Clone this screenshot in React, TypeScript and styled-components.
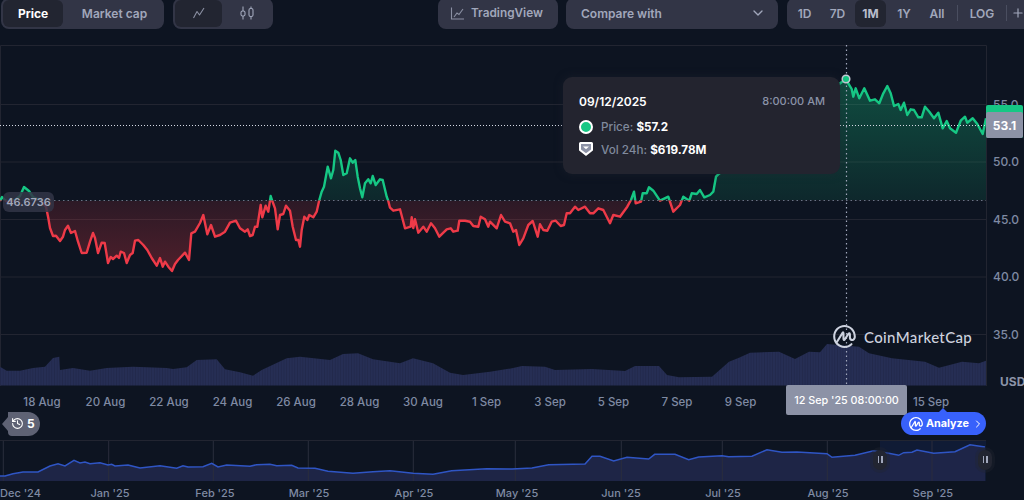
import React from "react";
import styled, { createGlobalStyle } from "styled-components";
import { ChevronDown, History, Plus, ChevronRight } from "lucide-react";
import { SiCoinmarketcap } from "react-icons/si";

const Global = createGlobalStyle`
  html, body { margin: 0; padding: 0; background: #0d1421; }
  * { box-sizing: border-box; }
`;

const PRICE = "0,201 2,197 5,200 8,202 15,200 20,196 24,187 29,191 33,197 40,200 46,206.7 48.3,218 50,228 53,236 56,235.7 60,241 63,236.7 65,230 68,225.7 71,233 75,231 78,241.7 81.7,253 86.7,252.7 90,241.7 93,233 95,238 98,253 101.7,242.7 104.7,243 108,263 110.7,257 113,259 116.7,255.7 119,258 120.7,251.7 124,253 126.7,263 130,255 132.7,253 135,240.7 138.3,240 143.3,245 147.3,250 151.7,258 156.7,265.7 160,258 162.7,266.7 165,261.7 168.3,266.7 172,271 175,264 178,260 185,252.7 189,260 191.3,233.3 195,231.7 200,223 203.3,215 207.3,234.3 211,225 215,236.7 220,235 225,231.7 230,222.7 236,220.7 240,228.3 245,231.7 247.7,229.3 250,236 252.7,235 255,226.7 257.3,226.7 260.7,205 262.3,217.3 265.7,205.7 268.3,211.7 270.7,196 272.3,201 275,208.3 277.7,229.3 280,215 283.3,214 286,205.7 290,210.7 292.7,226.7 296,240 298.3,240 300,246.7 301.7,230 304.3,216.7 307.3,220 309.3,215 313.3,217.3 316.7,211.7 319.3,200 321.7,191.7 324,186.7 327.7,166.7 331,178.3 333.3,170 335.3,150.7 338.3,152.7 340.7,160 343.3,175 346.7,173.3 350,158.3 352.7,162.7 355.3,160 357.7,176.7 360,188.3 362.3,197.3 365,183.3 368.3,179.3 370.7,183.3 372.7,176 375.7,185 380,179.3 382.7,180 386.7,196.7 388.3,201 390,207.7 393.3,210.7 400,209.3 405,228.3 410.7,226.7 411.7,217.3 413.3,228 415,219.3 418.3,232.7 423.3,226.7 426.7,231.7 431,223.3 435,228.3 439.3,236.7 446.7,229.3 450.7,228.3 453.3,231.7 457.7,230.7 459.3,220.7 465,220.7 470,221.7 473.3,226 478.3,226.7 480.7,216.7 485,219.3 488.3,226.7 490,221.7 496.7,228.3 501,215 505,221.7 510,223.3 513.3,231.7 516,230 519.3,245 523.3,238.3 528.3,225 532.7,221 537.7,236.7 540,224.3 543.3,230 547.3,230.7 551.7,221.7 555.7,220.7 560.7,226 564,225 566.7,213.3 570,213.3 575,206.7 578.3,210 585,206.7 590,213.3 593.3,213.3 598.3,208.3 603.3,210 610,223.3 613.3,215 620,216.7 627.3,206.7 631,200 634,191.7 635.7,203.3 641,201.7 642.7,193.3 646.7,193.3 649,187.3 653.3,190.7 660,200.7 668.3,196.7 673.3,211.7 680,205 683.3,196.7 689.3,200.7 691.7,193.3 696.7,194 700,190 704.3,197.3 710,195 713.3,191.7 716,176.7 718.3,174.3 780,130 846,78.7 848.3,83.3 851.7,89 853.3,96.7 855.7,88.3 859.3,98.3 864.3,88.3 870,100.7 875,99.3 879.3,103.3 883.3,93.3 887.3,86 890.7,93.3 894,106 898.3,104 900.7,110 904,102.7 907.3,115 910.7,109.3 914,110 918.3,117.3 921.7,117.3 925,106.7 929.3,111.7 934,118.3 938.3,112.7 942.7,128.3 946.7,121 950,128.3 956,132.7 960.7,120.7 965,116.7 967.3,122.7 972.7,118.3 977.3,124 982.7,134 986,118.3";

const VOLUME = "0,366.7 6.7,370.7 20,370.7 33,368 45,366.7 53,358 59.3,356.7 60,370 73,368 90,370.7 106.7,368 133,366.7 166.7,368 173,369 186.7,367.3 196.7,360 216.7,359.3 225,369.3 240,372.3 253,375.7 261.7,370 286.7,358.3 300,356.7 330,360 343,354 358,353.3 373,359.3 400,363.3 413,358.3 433,363.3 450,372.7 463,375 490,371.7 512,368.3 522,366 545,366.7 555,370 592,369 625,371 635,366 659,366 667,375 679,377.3 712,376.7 729,361.7 739,357.7 750,352.7 779,351.7 795,359 809,351.7 820,352.3 827,344 859,346.7 869,353.3 892,358.3 925,361.7 939,367.7 962,361.7 979,363.3 986,360.7";

const NAV = "0,475 5,475 13,472.7 23,471 38,471 50,465 58,462.7 65,465 74,459.3 80,462 85,461 90,462.7 100,461.7 108,464 111.7,463.3 115,465 128,464 140,467 160,464.7 176.7,467.3 183,464.7 188,466 203,465.7 211.7,462.3 218,466 226.7,464 250,465.3 256.7,463.7 270,463.3 276.7,464.7 291.7,464.3 298,467 315,467.3 328,470.3 353,472.3 373,470.7 390,469.7 413,472.3 433,473.3 451.7,469.7 486.7,467.7 512,468 532,467 548.7,463.7 585,463 592,455.3 600,455.3 613.7,460 627,456.3 648.7,458 654.7,453.3 675,453.3 688.7,458.7 698.7,456 722,454.7 728.7,455.7 752,455.3 767,448.7 782,451.3 797,451 827,452.7 832,456.3 855,454.3 873.7,449.7 888.7,452.3 898.7,454.3 903.7,451.7 912,451.3 917,449 933.7,452.3 955,450.7 970,443.7 985,446";

const GRID_Y = [104.5, 162, 219.5, 277, 334.5];
const MONTH_X = [3.3, 108.7, 213.3, 308.3, 413.3, 515.3, 621.3, 722.3, 827.3, 932];
const X_LABELS = ["18 Aug", "20 Aug", "22 Aug", "24 Aug", "26 Aug", "28 Aug", "30 Aug", "1 Sep", "3 Sep", "5 Sep", "7 Sep", "9 Sep", "", "", "15 Sep"];
const PRICES = ["55.0", "50.0", "45.0", "40.0", "35.0"];
const MONTHS: [string, number][] = [
  ["Dec '24", 20], ["Jan '25", 110], ["Feb '25", 215], ["Mar '25", 309], ["Apr '25", 414], ["May '25", 517],
  ["Jun '25", 621], ["Jul '25", 723], ["Aug '25", 828], ["Sep '25", 933],
];

const Page = styled.div`
  width: 1024px; height: 500px; overflow: hidden; background: #0d1421;
  font-family: Inter, "Liberation Sans", sans-serif; display: flex; flex-direction: column;
`;
const Toolbar = styled.div`
  display: flex; height: 31px; margin-top: -2.5px; padding-left: 1px; flex: none; width: 1060px;
`;
const Pill = styled.div<{ $w: number; $gap?: number }>`
  width: ${(p) => p.$w}px; margin-left: ${(p) => p.$gap ?? 0}px; height: 31px; flex: none;
  background: #323546; border-radius: 8px; display: flex; align-items: center; padding: 2px;
  color: #a1a7bb; font-size: 12px; font-weight: 600;
`;
const Tab = styled.div<{ $active?: boolean; $w: number; $tone?: string }>`
  width: ${(p) => p.$w}px; height: 27px; border-radius: 6px; flex: none;
  display: flex; align-items: center; justify-content: center;
  background: ${(p) => (p.$active ? "#222531" : "transparent")};
  color: ${(p) => p.$tone ?? "#a1a7bb"};
  font-size: 12px; font-weight: ${(p) => (p.$tone ? 700 : 600)};
`;
const PillContent = styled.div`
  display: flex; align-items: center; justify-content: space-between; width: 100%; padding: 0 10px 0 13px;
`;
const IconLabel = styled.div`
  display: flex; align-items: center; gap: 6px; padding-left: 10px; font-size: 11.8px;
`;
const Divider = styled.div<{ $left: number }>`
  width: 1px; height: 16px; background: #4a4e60; flex: none; margin: 0 4px 0 ${(p) => p.$left}px;
`;
const LogBtn = styled.div`
  width: 40px; flex: none; text-align: center; font-size: 12px; font-weight: 600; color: #a1a7bb;
`;

const Plot = styled.div`
  position: relative; display: flex; height: 341px; margin-top: 16.5px; flex: none;
`;
const PlotSvg = styled.svg`
  width: 987px; height: 341px; display: block; flex: none;
`;
const PriceAxis = styled.div`
  width: 37px; flex: none; display: flex; flex-direction: column; padding-top: 30.5px;
`;
const PriceTick = styled.div`
  height: 57.5px; flex: none; display: flex; align-items: center; padding-left: 6px;
  color: #7f8aa3; font-size: 12px; font-weight: 500;
`;
const Usd = styled.div`
  margin-top: 11px; color: #8b93a8; font-size: 12px; font-weight: 700; white-space: nowrap; padding-left: 13px;
`;
const LastPrice = styled.div`
  position: absolute; left: 986px; top: 60px; width: 37px; height: 33px; background: #16c784; border-radius: 2px;
  display: flex; align-items: flex-end;
`;
const LastPriceValue = styled.div`
  width: 100%; height: 26px; background: #8c92a6; border-radius: 2px; color: #fff; font-size: 12px; font-weight: 700;
  display: flex; align-items: center; justify-content: center;
`;
const BaseTag = styled.div`
  position: absolute; left: 3px; top: 147px; width: 51px; height: 20px; border-radius: 6px;
  background: rgba(50, 53, 70, 0.85); color: #a1a7bb; font-size: 11px; font-weight: 600;
  display: flex; align-items: center; justify-content: center;
`;
const Tooltip = styled.div`
  position: absolute; left: 563px; top: 32px; width: 277px; height: 97px; border-radius: 9px;
  background: #23242f; box-shadow: 0 0 10px rgba(34, 37, 49, 0.45); padding: 16px 15px 0 16px;
  display: flex; flex-direction: column; font-size: 11.7px;
`;
const TipHead = styled.div`
  display: flex; justify-content: space-between; align-items: center; height: 16px; margin-bottom: 6px;
`;
const TipDate = styled.span`
  color: #fff; font-weight: 600; font-size: 12px;
`;
const TipTime = styled.span`
  color: #8b93a8; font-weight: 500; font-size: 11px;
`;
const TipRow = styled.div`
  display: flex; align-items: center; height: 23px; gap: 8px; color: #808a9d; font-weight: 500;
`;
const TipIconSlot = styled.div`
  width: 14px; flex: none; display: flex; align-items: center; justify-content: center;
`;
const GreenDot = styled.div`
  width: 14px; height: 14px; border-radius: 50%; background: #16c784; border: 2px solid #fff; flex: none;
`;
const ShieldSvg = styled.svg`
  width: 16px; height: 16px; flex: none; margin-top: -2px;
`;
const Strong = styled.b`
  color: #fff; font-weight: 700;
`;
const Brand = styled.div`
  position: absolute; left: 833px; top: 280px; display: flex; align-items: center; gap: 8px;
  color: #cdd2df; font-size: 15px; font-weight: 500; letter-spacing: 0.35px; font-family: Lato, Inter, sans-serif;
`;

const XAxis = styled.div`
  position: relative; height: 25.5px; flex: none; padding: 7px 0 0 10.25px;
  display: grid; grid-template-columns: repeat(15, 63.5px); align-items: start;
`;
const XTick = styled.div`
  text-align: center; color: #7f8aa3; font-size: 11.5px; font-weight: 500; line-height: 18px;
`;
const CrossLabel = styled.div`
  position: absolute; left: 786px; top: -1px; width: 121px; height: 30px; background: #8c92a6; border-radius: 2px;
  color: #fff; font-size: 10.8px; font-weight: 500; display: flex; align-items: center; justify-content: center; white-space: nowrap;
`;
const TagRow = styled.div`
  height: 24px; flex: none; display: flex; justify-content: space-between; align-items: center; padding: 0 38px 0 8px;
  position: relative;
`;
const HistoryTag = styled.div`
  position: relative; width: 32px; height: 24px; background: #5e6274; border-radius: 0 12px 12px 4px;
  color: #fff; font-size: 12px; font-weight: 700; display: flex; align-items: center; gap: 3px; padding-left: 3px;
  &::before {
    content: ""; position: absolute; left: -6px; top: 5px; width: 0; height: 0;
    border-top: 7px solid transparent; border-bottom: 7px solid transparent; border-right: 6px solid #5e6274;
  }
`;
const Analyze = styled.div`
  position: relative; width: 85px; height: 23px; background: #3861fb; border-radius: 12px; color: #fff;
  font-size: 10.8px; font-weight: 700; display: flex; align-items: center; gap: 3px; padding-left: 8px;
  &::before {
    content: ""; position: absolute; left: 38px; top: -4px; width: 0; height: 0;
    border-left: 4px solid transparent; border-right: 4px solid transparent; border-bottom: 4px solid #3861fb;
  }
`;
const Navigator = styled.div`
  position: relative; width: 987px; height: 41px; margin-top: 4px; flex: none;
`;
const NavSvg = styled.svg`
  width: 987px; height: 41px; display: block;
`;
const Handle = styled.div<{ $left: number }>`
  position: absolute; left: ${(p) => p.$left}px; top: 10px; width: 14px; height: 20px; border-radius: 7px; background: #222531;
  box-shadow: 0 0 0 3px rgba(34, 37, 49, 0.35); display: flex; align-items: center; justify-content: center; gap: 2px;
`;
const HandleBar = styled.span`
  width: 1.5px; height: 7px; background: #a1a7bb;
`;
const MonthAxis = styled.div`
  display: flex; height: 20px; flex: none; align-items: center; padding-top: 5px;
`;
const MonthTick = styled.div<{ $w: number }>`
  width: ${(p) => p.$w}px; flex: none; white-space: nowrap; color: #7f8aa3; font-size: 11px; font-weight: 500; text-align: center;
`;

const LineIcon = () => (
  <svg width="16" height="16" viewBox="0 0 16 16" fill="none" stroke="#8b90a3" strokeWidth="1.1" strokeLinejoin="round">
    <path d="M2.5 13 L6 6.5 L8.5 10 L13 3" />
  </svg>
);
const CandleIcon = () => (
  <svg width="16" height="16" viewBox="0 0 16 16" fill="none" stroke="#a1a7bb" strokeWidth="1.1">
    <path d="M4 1.5v13M12 1.5v13" />
    <rect x="2" y="6" width="4" height="5" rx="1.6" fill="#323546" />
    <rect x="10" y="3.5" width="4" height="8" rx="1.6" fill="#323546" />
  </svg>
);
const ChartViewIcon = () => (
  <svg width="15" height="15" viewBox="0 0 15 15" fill="none" stroke="#8b90a3" strokeWidth="1.1">
    <path d="M1.5 1.5v11.5h12.5M4 11 L7 7 L9 8.5 L13 3" />
  </svg>
);
const VolumeShield = () => (
  <ShieldSvg viewBox="0 0 16 16">
    <path d="M2.5 1h11a1.5 1.5 0 0 1 1.5 1.5v6.5a1 1 0 0 1-.4.8L8 15 1.4 9.8A1 1 0 0 1 1 9V2.5A1.5 1.5 0 0 1 2.5 1z" fill="#fff" />
    <path d="M3 3h10v5.5L8 12.3 3 8.5z" fill="#8c92a6" />
    <path d="M5 5.5h6L8 8.3z" fill="#fff" />
  </ShieldSvg>
);

export default function App() {
  const pts = PRICE.split(" ");
  const first = pts[0].split(",")[0];
  const last = pts[pts.length - 1].split(",")[0];
  const area = `M${first},200.5 L${PRICE.replace(/ /g, " L")} L${last},200.5 Z`;
  const volArea = `M0,385.5 L${VOLUME.replace(/ /g, " L")} L986,385.5 Z`;
  const navArea = `M0,480 L${NAV.replace(/ /g, " L")} L985,480 Z`;

  let end = 0;
  const monthCells = MONTHS.map(([label, centre]) => {
    const width = 2 * (centre - end);
    end += width;
    return { label, width };
  });

  return (
    <Page>
      <Global />
      <Toolbar>
        <Pill $w={163}>
          <Tab $active $w={60} $tone="#fff">Price</Tab>
          <Tab $w={103}>Market cap</Tab>
        </Pill>
        <Pill $w={100} $gap={9}>
          <Tab $active $w={47}><LineIcon /></Tab>
          <Tab $w={49}><CandleIcon /></Tab>
        </Pill>
        <Pill $w={120} $gap={165}>
          <IconLabel><ChartViewIcon />TradingView</IconLabel>
        </Pill>
        <Pill $w={212} $gap={8}>
          <PillContent>Compare with<ChevronDown size={16} color="#a1a7bb" /></PillContent>
        </Pill>
        <Pill $w={273} $gap={9}>
          <Tab $w={31}>1D</Tab>
          <Tab $w={35}>7D</Tab>
          <Tab $active $w={31} $tone="#b8bdcc">1M</Tab>
          <Tab $w={36}>1Y</Tab>
          <Tab $w={30}>All</Tab>
          <Divider $left={5} />
          <LogBtn>LOG</LogBtn>
          <Divider $left={4} />
          <Plus size={14} color="#a1a7bb" />
        </Pill>
      </Toolbar>

      <Plot>
        <PlotSvg viewBox="0 45 987 341">
          <defs>
            <clipPath id="above"><rect x="0" y="0" width="987" height="200.5" /></clipPath>
            <clipPath id="below"><rect x="0" y="200.5" width="987" height="200" /></clipPath>
            <linearGradient id="greenFill" gradientUnits="userSpaceOnUse" x1="0" y1="80" x2="0" y2="200.5">
              <stop offset="0" stopColor="#16c784" stopOpacity="0.32" />
              <stop offset="1" stopColor="#16c784" stopOpacity="0.11" />
            </linearGradient>
            <linearGradient id="redFill" gradientUnits="userSpaceOnUse" x1="0" y1="200.5" x2="0" y2="272">
              <stop offset="0" stopColor="#ea3943" stopOpacity="0.14" />
              <stop offset="1" stopColor="#ea3943" stopOpacity="0.3" />
            </linearGradient>
            <pattern id="bars" width="2.7" height="10" patternUnits="userSpaceOnUse">
              <rect width="2.7" height="10" fill="#262e54" />
              <rect width="0.7" height="10" fill="#20274a" />
            </pattern>
          </defs>
          <path d="M0.5 386V45.5H986.5V386" fill="none" stroke="#222531" />
          {GRID_Y.map((y) => (
            <line key={y} x1="0" x2="986" y1={y} y2={y} stroke="#222531" />
          ))}
          <path d={volArea} fill="url(#bars)" />
          <path d={area} fill="url(#greenFill)" clipPath="url(#above)" />
          <path d={area} fill="url(#redFill)" clipPath="url(#below)" />
          <line x1="0" x2="986" y1="200.5" y2="200.5" stroke="#6a7285" strokeDasharray="1.5 3" />
          <polyline points={PRICE} fill="none" stroke="#16c784" strokeWidth="2.4" strokeLinejoin="round" clipPath="url(#above)" />
          <polyline points={PRICE} fill="none" stroke="#ee3a48" strokeWidth="2.4" strokeLinejoin="round" clipPath="url(#below)" />
          <line x1="0" x2="986" y1="125.5" y2="125.5" stroke="#d5d9e4" strokeDasharray="1 2" />
          <line x1="846.5" x2="846.5" y1="45" y2="385" stroke="#a1a7bb" strokeWidth="1.2" strokeDasharray="1.5 3" />
          <circle cx="846" cy="79" r="3.8" fill="#16c784" stroke="#c7ccd8" strokeWidth="1.5" />
        </PlotSvg>
        <PriceAxis>
          {PRICES.map((p) => <PriceTick key={p}>{p}</PriceTick>)}
          <Usd>USD</Usd>
        </PriceAxis>
        <LastPrice><LastPriceValue>53.1</LastPriceValue></LastPrice>
        <BaseTag>46.6736</BaseTag>
        <Tooltip>
          <TipHead><TipDate>09/12/2025</TipDate><TipTime>8:00:00 AM</TipTime></TipHead>
          <TipRow><TipIconSlot><GreenDot /></TipIconSlot><span>Price: <Strong>$57.2</Strong></span></TipRow>
          <TipRow><TipIconSlot><VolumeShield /></TipIconSlot><span>Vol 24h: <Strong>$619.78M</Strong></span></TipRow>
        </Tooltip>
        <Brand><SiCoinmarketcap size={23} />CoinMarketCap</Brand>
      </Plot>

      <XAxis>
        {X_LABELS.map((l, i) => <XTick key={i}>{l}</XTick>)}
        <CrossLabel>12 Sep '25 08:00:00</CrossLabel>
      </XAxis>

      <TagRow>
        <HistoryTag><History size={13} />5</HistoryTag>
        <Analyze><SiCoinmarketcap size={14} />Analyze<ChevronRight size={12} /></Analyze>
      </TagRow>

      <Navigator>
        <NavSvg viewBox="0 439 987 41">
          <line x1="0" x2="986" y1="439.5" y2="439.5" stroke="#222531" />
          <rect x="880" y="440" width="106" height="40" fill="#3861fb" fillOpacity="0.09" />
          <path d={navArea} fill="#20274a" fillOpacity="0.9" />
          {MONTH_X.map((x) => (
            <line key={x} x1={x} x2={x} y1="440" y2="480" stroke="#2a2d3c" />
          ))}
          <polyline points={NAV} fill="none" stroke="#2f55c4" strokeWidth="1.5" />
        </NavSvg>
        <Handle $left={873}><HandleBar /><HandleBar /></Handle>
        <Handle $left={978}><HandleBar /><HandleBar /></Handle>
      </Navigator>

      <MonthAxis>
        {monthCells.map((m) => <MonthTick key={m.label} $w={m.width}>{m.label}</MonthTick>)}
      </MonthAxis>
    </Page>
  );
}
